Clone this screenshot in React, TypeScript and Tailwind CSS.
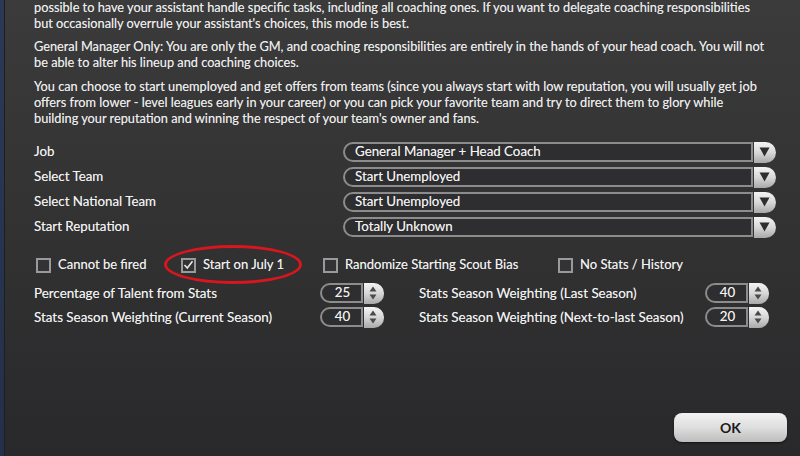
import React from "react";

const font = { fontFamily: "Lato, 'Open Sans', sans-serif" };

function Dropdown({ label, value }: { label: string; value: string }) {
  return (
    <div className="flex items-center h-[20px]">
      <div className="w-[309px] text-[13.3px] text-[#f2f2f2]">{label}</div>
      <div className="flex-1 h-[20px] border-2 border-[#8c8c8c] rounded-l-[10px] bg-[#2e2d2f] flex items-center pl-[10px] text-[13.3px] text-[#f2f2f2] leading-none">
        {value}
      </div>
      <div className="ml-[1px] w-[22px] h-[21px] rounded-r-[11px] bg-gradient-to-b from-[#f4f4f4] via-[#d8d8d8] to-[#a9a9a9] flex items-center justify-center pr-[2px]">
        <svg width="11" height="10" viewBox="0 0 11 10">
          <path d="M0.5 0.5 L10.5 0.5 L5.5 9.5 Z" fill="#2d2d2d" />
        </svg>
      </div>
    </div>
  );
}

function Checkbox({ label, checked, w }: { label: string; checked?: boolean; w: string }) {
  return (
    <div className={`flex items-center ${w}`}>
      <div className="w-[15px] h-[15px] border-2 border-[#9a9a9a] bg-[#333234] flex items-center justify-center">
        {checked && (
          <svg width="11" height="10" viewBox="0 0 11 10">
            <path d="M1.5 5 L4.3 8 L9.5 1.2" stroke="#e8e8e8" strokeWidth="1.6" fill="none" />
          </svg>
        )}
      </div>
      <span className="ml-[7px] text-[13px] text-[#f2f2f2]">{label}</span>
    </div>
  );
}

function Spinner({ label, value }: { label: string; value: string }) {
  return (
    <div className="flex items-center h-[20px]">
      <div className="flex-1 text-[13.4px] text-[#f2f2f2]">{label}</div>
      <div className="w-[43px] h-[20px] border-2 border-[#8c8c8c] rounded-l-[10px] bg-[#2e2d2f] flex items-center justify-center text-[13.3px] text-[#f2f2f2] leading-none pl-[2px]">
        {value}
      </div>
      <div className="ml-[1px] w-[20px] h-[21px] rounded-r-[10px] bg-gradient-to-b from-[#f4f4f4] via-[#d6d6d6] to-[#a9a9a9] flex flex-col items-center justify-center gap-[2px] pr-[2px]">
        <svg width="8" height="6" viewBox="0 0 8 6">
          <path d="M4 0.5 L7.5 5.5 L0.5 5.5 Z" fill="#4a4a4a" />
        </svg>
        <svg width="8" height="6" viewBox="0 0 8 6">
          <path d="M0.5 0.5 L7.5 0.5 L4 5.5 Z" fill="#4a4a4a" />
        </svg>
      </div>
    </div>
  );
}

export default function App() {
  return (
    <div
      style={font}
      className="relative w-[800px] h-[456px] overflow-hidden flex bg-gradient-to-b from-[#3b3b3c] via-[#323233] to-[#29292b] [text-shadow:0_0_0.6px_rgba(255,255,255,0.55)]"
    >
      <div className="w-[4px] h-full bg-gradient-to-b from-[#2c3956] to-[#243049]" />
      <div className="w-[1px] h-full bg-[#1e1e20]" />
      <div className="flex-1 flex flex-col pl-[29px] pr-[24px]">
        <div className="text-[12.75px] leading-[16px] text-[#ececec] whitespace-nowrap mt-[-1px]">
          <p>
            possible to have your assistant handle specific tasks, including all coaching ones. If you want to delegate coaching responsibilities
            <br />
            but occasionally overrule your assistant's choices, this mode is best.
          </p>
          <p className="mt-[7px]">
            General Manager Only: You are only the GM, and coaching responsibilities are entirely in the hands of your head coach. You will not
            <br />
            be able to alter his lineup and coaching choices.
          </p>
          <p className="mt-[8px]">
            You can choose to start unemployed and get offers from teams (since you always start with low reputation, you will usually get job
            <br />
            offers from lower - level leagues early in your career) or you can pick your favorite team and try to direct them to glory while
            <br />
            building your reputation and winning the respect of your team's owner and fans.
          </p>
        </div>

        <div className="mt-[16px] flex flex-col gap-[5px]">
          <Dropdown label="Job" value="General Manager + Head Coach" />
          <Dropdown label="Select Team" value="Start Unemployed" />
          <Dropdown label="Select National Team" value="Start Unemployed" />
          <Dropdown label="Start Reputation" value="Totally Unknown" />
        </div>

        <div className="mt-[18px] flex items-center h-[20px] pl-[2px]">
          <Checkbox label="Cannot be fired" w="w-[145px]" />
          <Checkbox label="Start on July 1" checked w="w-[142px]" />
          <Checkbox label="Randomize Starting Scout Bias" w="w-[235px]" />
          <Checkbox label="No Stats / History" w="w-[200px]" />
        </div>

        <div className="mt-[8px] grid grid-cols-[350px_350px] gap-x-[35px] gap-y-[4px]">
          <Spinner label="Percentage of Talent from Stats" value="25" />
          <Spinner label="Stats Season Weighting (Last Season)" value="40" />
          <Spinner label="Stats Season Weighting (Current Season)" value="40" />
          <Spinner label="Stats Season Weighting (Next-to-last Season)" value="20" />
        </div>

        <div className="flex-1" />
        <div className="flex justify-end pb-[14px] mr-[-11px]">
          <button className="w-[113px] h-[29px] rounded-[8px] bg-gradient-to-b from-[#f2f2f2] via-[#dedede] to-[#bdbdbd] shadow-[0_1px_2px_rgba(0,0,0,0.6)] text-[14px] font-bold text-[#1a1a1a] [text-shadow:none]">
            OK
          </button>
        </div>
      </div>

      <div className="absolute left-[164px] top-[245px] w-[138px] h-[39px] rounded-[50%] border-[3px] border-[#d8161d]" />
    </div>
  );
}
